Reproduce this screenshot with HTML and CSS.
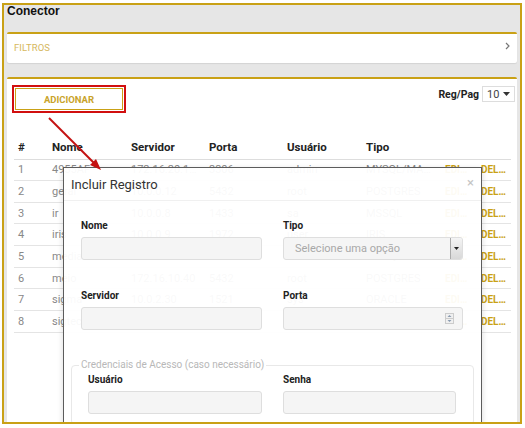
FILE: index.html
```html
<!DOCTYPE html>
<html lang="pt">
<head>
<meta charset="utf-8">
<title>Conector</title>
<link rel="stylesheet" href="styles.css">
</head>
<body>
<div class="frame">
  <h1 class="title">Conector</h1>
  <div class="card filters">
    <span class="filters-label">FILTROS</span>
    <svg class="chev" width="5" height="8" viewBox="0 0 5 8"><path d="M1 1 L4 4 L1 7" fill="none" stroke="#777" stroke-width="1.2"/></svg>
  </div>
  <div class="card main">
    <div class="toolbar">
      <div class="highlight"><button class="btn-add">ADICIONAR</button></div>
      <div class="regpag">
        <span class="regpag-label">Reg/Pag</span>
        <div class="regpag-select"><span>10</span><svg width="7" height="4" viewBox="0 0 7 4"><path d="M0 0 H7 L3.5 4 Z" fill="#333"/></svg></div>
      </div>
    </div>
    <table class="grid">
      <colgroup>
        <col class="c-num"><col class="c-nome"><col class="c-serv"><col class="c-porta"><col class="c-usr"><col class="c-tipo"><col class="c-edit"><col class="c-del">
      </colgroup>
      <thead>
        <tr><th>#</th><th>Nome</th><th>Servidor</th><th>Porta</th><th>Usuário</th><th>Tipo</th><th></th><th></th></tr>
      </thead>
      <tbody>
        <tr><td>1</td><td>4955AF</td><td>172.16.20.181</td><td>3306</td><td>admin</td><td>MYSQL/MARIADB</td><td class="act">EDITAR</td><td class="act">DELETAR</td></tr>
        <tr><td>2</td><td>geral</td><td>10.0.0.12</td><td>5432</td><td>root</td><td>POSTGRES</td><td class="act">EDITAR</td><td class="act">DELETAR</td></tr>
        <tr><td>3</td><td>ir</td><td>10.0.0.8</td><td>1433</td><td>sa</td><td>MSSQL</td><td class="act">EDITAR</td><td class="act">DELETAR</td></tr>
        <tr><td>4</td><td>iris</td><td>10.0.0.9</td><td>1972</td><td>user</td><td>IRIS</td><td class="act">EDITAR</td><td class="act">DELETAR</td></tr>
        <tr><td>5</td><td>media</td><td>10.0.1.20</td><td>3306</td><td>admin</td><td>MYSQL</td><td class="act">EDITAR</td><td class="act">DELETAR</td></tr>
        <tr><td>6</td><td>meio</td><td>172.16.10.40</td><td>5432</td><td>root</td><td>POSTGRES</td><td class="act">EDITAR</td><td class="act">DELETAR</td></tr>
        <tr><td>7</td><td>sigma</td><td>10.0.2.30</td><td>1521</td><td>sys</td><td>ORACLE</td><td class="act">EDITAR</td><td class="act">DELETAR</td></tr>
        <tr><td>8</td><td>sigtec</td><td>10.0.2.31</td><td>1521</td><td>sys</td><td>ORACLE</td><td class="act">EDITAR</td><td class="act">DELETAR</td></tr>
      </tbody>
    </table>

    <div class="modal">
      <div class="modal-header">
        <span class="modal-title">Incluir Registro</span>
        <span class="modal-close">×</span>
      </div>
      <div class="modal-body">
        <div class="form-row">
          <div class="field">
            <label class="lbl">Nome</label>
            <div class="input"></div>
          </div>
          <div class="field">
            <label class="lbl">Tipo</label>
            <div class="input select">
              <span class="placeholder">Selecione uma opção</span>
              <span class="select-btn"><svg width="5" height="3" viewBox="0 0 5 3"><path d="M0 0 H5 L2.5 3 Z" fill="#222"/></svg></span>
            </div>
          </div>
        </div>
        <div class="form-row second">
          <div class="field">
            <label class="lbl">Servidor</label>
            <div class="input"></div>
          </div>
          <div class="field">
            <label class="lbl">Porta</label>
            <div class="input number">
              <svg class="spin" width="9" height="11" viewBox="0 0 9 11"><rect x="0.5" y="0.5" width="8" height="10" fill="#f0f0f0" stroke="#ccc"/><path d="M2.5 4 L4.5 2 L6.5 4 Z" fill="#8a9bb0"/><path d="M2.5 7 L4.5 9 L6.5 7 Z" fill="#8a9bb0"/><line x1="1" y1="5.5" x2="8" y2="5.5" stroke="#ccc"/></svg>
            </div>
          </div>
        </div>
        <fieldset class="creds">
          <legend>Credenciais de Acesso (caso necessário)</legend>
          <div class="form-row inner">
            <div class="field">
              <label class="lbl">Usuário</label>
              <div class="input"></div>
            </div>
            <div class="field">
              <label class="lbl">Senha</label>
              <div class="input"></div>
            </div>
          </div>
        </fieldset>
      </div>
    </div>

    <svg class="arrow" width="60" height="60" viewBox="0 0 60 60">
      <line x1="1" y1="1" x2="50" y2="50" stroke="#c41212" stroke-width="2"/>
      <path d="M53 53 L42 48 L48 42 Z" fill="#c41212"/>
    </svg>
  </div>
</div>
</body>
</html>
```

FILE: styles.css
```css
* { box-sizing: border-box; }
html, body { margin: 0; padding: 0; background: #fff; }
body { font-family: Roboto, "Liberation Sans", Arial, sans-serif; }

.frame {
  margin: 3px 0 0 2px;
  width: 520px;
  height: 421px;
  border: 2px solid #c9a116;
  background: #e6e6e6;
  padding: 0 3px;
  overflow: hidden;
}

.title {
  margin: 0;
  font-family: "Liberation Sans", Arial, sans-serif;
  font-size: 12px;
  line-height: 12px;
  font-weight: bold;
  color: #111;
  padding-left: 0;
}

.card {
  background: #fff;
  border-top: 2px solid #c9a116;
  border-radius: 2px;
}

.filters {
  margin-top: 15px;
  height: 31px;
  display: flex;
  align-items: center;
  justify-content: space-between;
  padding: 0 7px 2px 7px;
  box-shadow: 0 1px 1px rgba(0,0,0,0.08);
}
.filters-label {
  font-size: 9.5px;
  color: #d6b85e;
  letter-spacing: 0.1px;
}
.chev { margin-right: 0; margin-top: -3px; }

.main {
  margin-top: 14px;
  height: 360px;
  position: relative;
  padding: 6px 6px 0 7px;
}

.toolbar {
  display: flex;
  justify-content: space-between;
  align-items: flex-start;
  margin: 0 -4px 0 -2px;
}
.highlight {
  border: 2px solid #d10f0f;
  padding: 1px;
  width: 114px;
  height: 28px;
}
.btn-add {
  display: block;
  width: 100%;
  height: 100%;
  border: 1px solid #c9a116;
  background: #fff;
  color: #c9a32a;
  font-family: Roboto, sans-serif;
  font-weight: bold;
  font-size: 9.5px;
  padding: 0;
  cursor: pointer;
}
.regpag {
  display: flex;
  align-items: center;
  gap: 3px;
  margin-top: 1px;
}
.regpag-label {
  font-size: 10.5px;
  font-weight: bold;
  color: #222;
}
.regpag-select {
  width: 33px;
  height: 16px;
  border: 1px solid #ddd;
  display: flex;
  align-items: center;
  justify-content: space-between;
  padding: 0 4px 0 4px;
  font-size: 11px;
  color: #444;
}

.grid {
  margin-top: 22px;
  width: 497px;
  table-layout: fixed;
  border-collapse: collapse;
  font-size: 11px;
}
.c-num { width: 34px; }
.c-nome { width: 79px; }
.c-serv { width: 78px; }
.c-porta { width: 78px; }
.c-usr { width: 79px; }
.c-tipo { width: 79px; }
.c-edit { width: 36px; }
.c-del { width: 34px; }

.grid th {
  text-align: left;
  font-weight: bold;
  font-size: 11.5px;
  color: #222;
  height: 24px;
  padding: 0 4px;
  border-bottom: 1px solid #ddd;
}
.grid td {
  height: 21.67px;
  padding: 0 4px;
  color: #888;
  border-bottom: 1px solid #e4e4e4;
  white-space: nowrap;
  overflow: hidden;
  text-overflow: ellipsis;
}
.grid td.act {
  color: #c9a116;
  font-weight: bold;
  font-size: 10px;
}

.modal {
  position: absolute;
  left: 56px;
  top: 88px;
  width: 419px;
  height: 280px;
  border: 1px solid #5c5c5c;
  border-bottom: none;
  background: rgba(255,255,255,0.95);
  box-shadow: 0 2px 6px rgba(0,0,0,0.15);
}
.modal-header {
  height: 33px;
  display: flex;
  align-items: center;
  justify-content: space-between;
  padding: 0 7px;
  border-bottom: 1px solid #f0f0f0;
}
.modal-title {
  font-size: 13px;
  color: #333;
}
.modal-close {
  font-size: 13px;
  color: #c4c4c4;
  margin-top: -4px;
}
.modal-body {
  padding: 19px 7px 0 7px;
}
.form-row {
  display: grid;
  grid-template-columns: 181px 180px;
  column-gap: 21px;
  padding: 0 10px;
}
.form-row.second { margin-top: 30px; }
.field { display: flex; flex-direction: column; }
.lbl {
  font-size: 10px;
  line-height: 12px;
  font-weight: bold;
  color: #222;
  margin-bottom: 5px;
}
.input {
  height: 23px;
  background: #f5f5f5;
  border: 1px solid #dedede;
  border-radius: 3px;
  position: relative;
}
.select {
  display: flex;
  align-items: center;
  justify-content: space-between;
  padding-left: 11px;
  overflow: hidden;
}
.placeholder {
  font-size: 11px;
  color: #a8a8a8;
}
.select-btn {
  width: 12px;
  height: 100%;
  border-left: 1px solid #aaa;
  background: linear-gradient(#f4f4f4, #d8d8d8);
  display: flex;
  align-items: center;
  justify-content: center;
}
.number {
  display: flex;
  align-items: center;
  justify-content: flex-end;
  padding-right: 8px;
}

.creds {
  margin: 29px 0 0 0;
  border: 1px solid #e8e8e8;
  border-radius: 4px;
  padding: 3px 16px 10px 16px;
  min-width: 0;
}
.creds legend {
  font-size: 10px;
  line-height: 12px;
  color: #b8b8b8;
  padding: 0 2px;
  margin-left: -9px;
}
.form-row.inner {
  padding: 0;
  grid-template-columns: 174px 173px;
  column-gap: 21px;
}

.arrow {
  position: absolute;
  left: 41px;
  top: 38px;
  overflow: visible;
}
```
